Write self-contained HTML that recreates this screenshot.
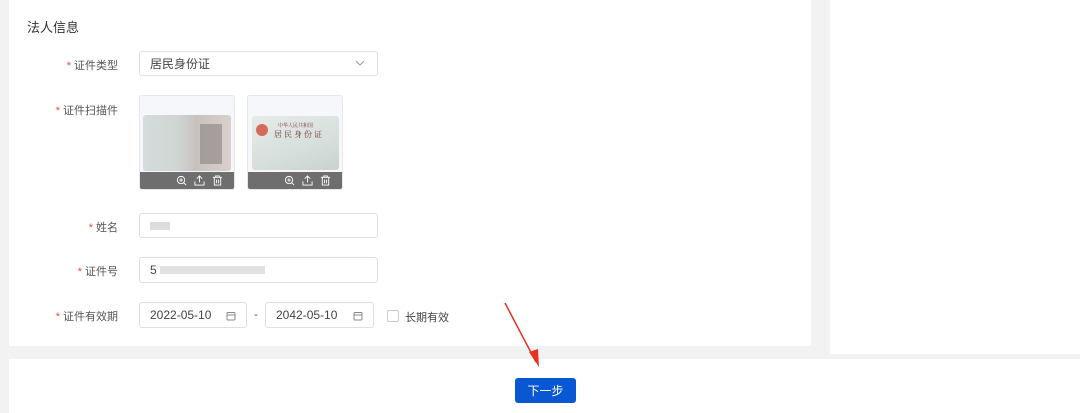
<!DOCTYPE html>
<html><head><meta charset="utf-8"><style>
*{margin:0;padding:0;box-sizing:border-box}
body{width:1080px;height:413px;background:#f2f2f3;position:relative;overflow:hidden;font-family:"Liberation Sans","Noto Sans CJK SC",sans-serif;color:#333}
.abs{position:absolute}
.card{left:9px;top:0;width:802px;height:346px;background:#fff}
.right{left:830px;top:0;width:250px;height:354px;background:#fff}
.bar{left:9px;top:359px;width:1071px;height:54px;background:#fff}
.lbl{font-size:11px;color:#555;text-align:right;width:110px;left:8px}
.lbl b{color:#e74c3c;font-weight:normal;margin-right:3px}
.inp{border:1px solid #dcdfe6;border-radius:3px;background:#fff;font-size:12px;color:#444;padding-left:10px;display:flex;align-items:center}
.up{width:96px;height:95px;border:1px solid #e6e8ee;border-radius:3px;background:#f6f7fa;overflow:hidden}
.tb{position:absolute;left:0;bottom:0;width:100%;height:17px;background:#6e6e6e;display:flex;justify-content:flex-end;gap:7px;padding-right:11px;align-items:center}
.tb svg{width:11px;height:11px}
</style></head><body>
<div class="abs card"></div>
<div class="abs right"></div>
<div class="abs bar"></div>
<div class="abs" style="left:27px;top:17px;font-size:13px;color:#333">法人信息</div>

<div class="abs lbl" style="top:57px"><b>*</b>证件类型</div>
<div class="abs inp" style="left:139px;top:51px;width:239px;height:25px">居民身份证
<svg style="position:absolute;right:12px;top:8px" width="10" height="7" viewBox="0 0 10 7"><path d="M1 1l4 4 4-4" fill="none" stroke="#999" stroke-width="1"/></svg></div>

<div class="abs lbl" style="top:102px"><b>*</b>证件扫描件</div>
<div class="abs up" style="left:139px;top:95px">
 <div class="abs" style="left:3px;top:19px;width:88px;height:56px;border-radius:3px;background:linear-gradient(90deg,#d4dcdc,#cfd6d2 40%,#c8c2bf 60%,#d8d0cc)"></div>
 <div class="abs" style="left:60px;top:28px;width:22px;height:40px;background:#8a8280;opacity:.6"></div>
 <div class="tb"><svg viewBox="0 0 12 12"><circle cx="5.5" cy="5.5" r="4" fill="none" stroke="#fff"/><path d="M3.5 5.5h4M5.5 3.5v4M8.5 8.5l2.5 2.5" stroke="#fff"/></svg><svg viewBox="0 0 12 12"><path d="M1 7v4h10V7M6 8V1M3 4l3-3 3 3" fill="none" stroke="#fff"/></svg><svg viewBox="0 0 12 12"><path d="M1 2.5h10M4 2.5V1h4v1.5M2.5 2.5v8.5h7V2.5M5 5v4M7 5v4" fill="none" stroke="#fff"/></svg></div>
</div>
<div class="abs up" style="left:247px;top:95px">
 <div class="abs" style="left:4px;top:20px;width:87px;height:54px;border-radius:3px;background:linear-gradient(160deg,#e6ece8,#d6dfdc 60%,#c9d2ce)"></div>
 <div class="abs" style="left:8px;top:28px;width:12px;height:12px;border-radius:50%;background:#d46a5a"></div>
 <div class="abs" style="left:30px;top:26px;font-family:'Noto Serif CJK SC',serif;font-size:5px;color:#733">中华人民共和国</div>
 <div class="abs" style="left:26px;top:33px;font-family:'Noto Serif CJK SC',serif;font-size:8px;color:#733;letter-spacing:2px">居民身份证</div>
 <div class="tb"><svg viewBox="0 0 12 12"><circle cx="5.5" cy="5.5" r="4" fill="none" stroke="#fff"/><path d="M3.5 5.5h4M5.5 3.5v4M8.5 8.5l2.5 2.5" stroke="#fff"/></svg><svg viewBox="0 0 12 12"><path d="M1 7v4h10V7M6 8V1M3 4l3-3 3 3" fill="none" stroke="#fff"/></svg><svg viewBox="0 0 12 12"><path d="M1 2.5h10M4 2.5V1h4v1.5M2.5 2.5v8.5h7V2.5M5 5v4M7 5v4" fill="none" stroke="#fff"/></svg></div>
</div>

<div class="abs lbl" style="top:219px"><b>*</b>姓名</div>
<div class="abs inp" style="left:139px;top:213px;width:239px;height:25px"><span style="display:inline-block;width:20px;height:8px;background:#ddd"></span></div>

<div class="abs lbl" style="top:263px"><b>*</b>证件号</div>
<div class="abs inp" style="left:139px;top:257px;width:239px;height:26px">5<span style="display:inline-block;width:105px;height:8px;background:#e2e2e2;margin-left:3px"></span></div>

<div class="abs lbl" style="top:308px"><b>*</b>证件有效期</div>
<div class="abs inp" style="left:139px;top:302px;width:108px;height:26px">2022-05-10
<svg style="position:absolute;right:10px;top:8px" width="10" height="10" viewBox="0 0 10 10"><rect x="1" y="1.5" width="8" height="7.5" rx="1" fill="none" stroke="#888"/><path d="M1 4h8" stroke="#888"/></svg></div>
<div class="abs" style="left:254px;top:307px;font-size:12px;color:#555">-</div>
<div class="abs inp" style="left:265px;top:302px;width:109px;height:26px">2042-05-10
<svg style="position:absolute;right:10px;top:8px" width="10" height="10" viewBox="0 0 10 10"><rect x="1" y="1.5" width="8" height="7.5" rx="1" fill="none" stroke="#888"/><path d="M1 4h8" stroke="#888"/></svg></div>
<div class="abs" style="left:387px;top:310px;width:12px;height:12px;border:1px solid #ccc;border-radius:2px"></div>
<div class="abs" style="left:405px;top:309px;font-size:11px;color:#444">长期有效</div>

<svg class="abs" style="left:500px;top:300px" width="45" height="70" viewBox="0 0 45 70"><path d="M5 3L36 62" stroke="#e53222" stroke-width="1.5"/><path d="M29 52L39 67 38 49Z" fill="#e53222"/></svg>

<div class="abs" style="left:515px;top:378px;width:61px;height:25px;background:#0a57d4;border-radius:3px;color:#fff;font-size:12px;display:flex;align-items:center;justify-content:center">下一步</div>
</body></html>
